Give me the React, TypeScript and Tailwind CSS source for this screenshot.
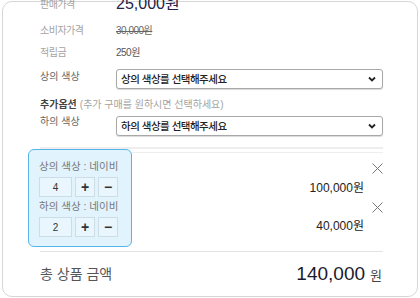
import React from "react";

const FONT = "font-['Liberation_Sans','Noto_Sans_CJK_KR',sans-serif]";

const Chevron = () => (
  <svg width="8" height="6" viewBox="0 0 8 6" className="shrink-0">
    <path d="M1 1.5 L4 4.5 L7 1.5" fill="none" stroke="#222" strokeWidth="1.8" />
  </svg>
);

const CloseIcon = () => (
  <svg width="11" height="11" viewBox="0 0 11 11">
    <path d="M0.5 0.5 L10.5 10.5 M10.5 0.5 L0.5 10.5" stroke="#777" strokeWidth="1" />
  </svg>
);

const SelectBox = ({ text }: { text: string }) => (
  <div className="flex-1 h-[20px] flex items-center justify-between pl-[4px] pr-[6px] bg-white border border-[#a8a8a8] rounded-[3px] shadow-[0_1px_1px_rgba(0,0,0,0.15)]">
    <span className="text-[10.5px] tracking-[-0.5px] font-medium text-[#222] leading-none">{text}</span>
    <Chevron />
  </div>
);

const QtyRow = ({ qty }: { qty: number }) => (
  <div className="flex gap-[3px] mt-[3px] h-[20px]">
    <div className="w-[33px] flex items-center justify-center border border-[#cddde6] bg-[#e9f6fd] text-[10px] text-[#333]">
      {qty}
    </div>
    <div className="w-[20px] flex items-center justify-center border border-[#cddde6] bg-[#e9f6fd] text-[14px] font-bold text-[#333] leading-none">
      +
    </div>
    <div className="w-[20px] flex items-center justify-center border border-[#cddde6] bg-[#e9f6fd] text-[14px] font-bold text-[#333] leading-none">
      −
    </div>
  </div>
);

export default function App() {
  const items = [
    { name: "상의 색상 : 네이비", qty: 4, price: "100,000원" },
    { name: "하의 색상 : 네이비", qty: 2, price: "40,000원" },
  ];

  return (
    <div className={`w-[420px] h-[298px] bg-white overflow-hidden pt-[1px] px-[2px] ${FONT}`}>
      <div className="h-[296px] border border-[#d6d6d6] rounded-[10px] pl-[37px] pr-[34px]">
        {/* price info */}
        <div className="-mt-[10px] h-[24px] flex items-center">
          <span className="w-[76px] text-[10px] tracking-[-0.5px] text-[#a3a3a3]">판매가격</span>
          <span className="text-[16px] text-[#23234a]">25,000원</span>
        </div>
        <div className="h-[28px] flex items-center">
          <span className="w-[76px] text-[10px] tracking-[-0.5px] text-[#a3a3a3]">소비자가격</span>
          <span className="text-[10px] tracking-[-0.5px] text-[#666] line-through">30,000원</span>
        </div>
        <div className="h-[16px] flex items-center">
          <span className="w-[76px] text-[10px] tracking-[-0.5px] text-[#a3a3a3]">적립금</span>
          <span className="text-[10px] tracking-[-0.5px] text-[#555]">250원</span>
        </div>

        {/* options */}
        <div className="mt-[9px] h-[20px] flex">
          <span className="w-[76px] leading-[16px] text-[10px] text-[#666]">상의 색상</span>
          <SelectBox text="상의 색상를 선택해주세요" />
        </div>
        <div className="mt-[8px] h-[14px] flex items-center text-[10px]">
          <span className="font-bold text-[#444]">추가옵션</span>
          <span className="ml-[3px] text-[#a3a3a3]">(추가 구매를 원하시면 선택하세요)</span>
        </div>
        <div className="mt-[5px] h-[20px] flex">
          <span className="w-[76px] leading-[12px] text-[10px] text-[#666]">하의 색상</span>
          <SelectBox text="하의 색상를 선택해주세요" />
        </div>

        {/* selected items */}
        <div className="mt-[11px] h-[2px] bg-[#eeeeee]" />
        <div className="flex">
          <div className="-ml-[12px] w-[104px] h-[98px] shrink-0 border border-[#56b4ea] rounded-[6px] bg-[#e1f3fd] pl-[10px] pt-[10px]">
            {items.map((item, i) => (
              <div key={i} className={i > 0 ? "mt-[3px]" : ""}>
                <div className="h-[14px] flex items-center text-[10.5px] text-[#777]">{item.name}</div>
                <QtyRow qty={item.qty} />
              </div>
            ))}
          </div>
          <div className="flex-1 mt-[3px] border-t border-[#eeeeee] pt-[10px]">
            {items.map((item, i) => (
              <div key={i} className={i > 0 ? "mt-[7px]" : ""}>
                <div className="h-[10px] flex justify-end">
                  <CloseIcon />
                </div>
                <div className={`${i > 0 ? "mt-[7px]" : "mt-[8px]"} h-[14px] flex items-center justify-end pr-[19px] text-[12px] text-[#222]`}>
                  {item.price}
                </div>
              </div>
            ))}
          </div>
        </div>

        {/* total */}
        <div className="mt-[4px] h-px bg-[#e3e3e3]" />
        <div className="h-[44px] flex items-center justify-between">
          <span className="text-[14px] text-[#555]">총 상품 금액</span>
          <span className="flex items-baseline pr-[1px] text-[#1a1a2e]">
            <span className="text-[19px]">140,000</span>
            <span className="ml-[5px] text-[13px] text-[#444]">원</span>
          </span>
        </div>
      </div>
    </div>
  );
}
